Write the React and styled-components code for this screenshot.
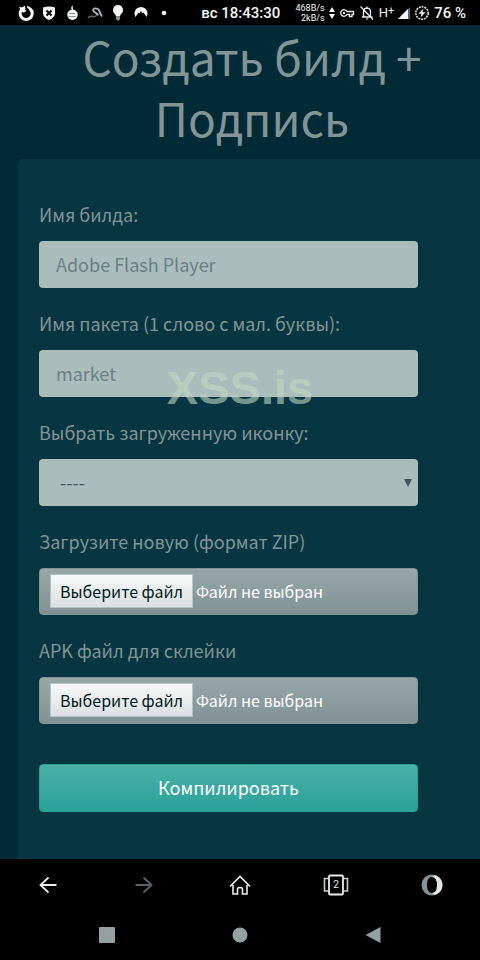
import React from 'react'
import styled, { createGlobalStyle } from 'styled-components';


function Upload({ id, label }) {
  return (
    <Field>
      <Label htmlFor={id}>{label}</Label>
      <FileBox>
        <FileInput id={id} type="file" />
        <FileButton>Выберите файл</FileButton>
        <FileName>Файл не выбран</FileName>
      </FileBox>
    </Field>
  );
}

function StatusBar() {
  return (
    <Status>
      <Notifications>
        <Icon viewBox="0 0 16 16" $size={16}>
          <path d="M8 2.500A6 6 0 1 0 13 5" fill="none" stroke="#f4f6f6" strokeWidth="3" transform="rotate(-8 8 8)" />
          <path d="M1 1.500L6.500 4L8.500 6L6 7.500L3 7z" fill="#f4f6f6" />
          <path d="M9 1q5 1 6.500 6h-3Q11.500 4 9 2.500z" fill="#f4f6f6" />
        </Icon>
        <Icon viewBox="0 0 16 16" $size={16}>
          <path d="M2 2.500Q8 .500 14 2.500V9Q13 13 8 15Q3 13 2 9z" fill="#f4f6f6" />
          <path d="M5.500 5.500l5 5M10.500 5.500l-5 5" stroke="#000" strokeWidth="2" />
        </Icon>
        <Icon viewBox="0 0 16 16" $size={16}>
          <path d="M8 5L7 3L8.500 0L9 4.500A5.200 5.200 0 1 1 8 4.500z" fill="#f4f6f6" />
          <path d="M5 8.500h6M4.500 11.500h7" stroke="#84949a" />
        </Icon>
        <Icon viewBox="0 0 16 16" $size={16}>
          <path d="M1 13Q3 10.500 6 11.500T10 8.500" fill="none" stroke="#56666a" strokeWidth="1.400" />
          <path d="M11.500 10L7 6.500Q5 4.500 7.500 3.500Q11 3 12.500 6Q13 9 15 11.500" fill="none" stroke="#a9b5b6" strokeWidth="1.800" />
        </Icon>
        <Icon viewBox="0 0 16 16" $size={16}>
          <path d="M8 0a5 5 0 0 0-3 9q.800.800.800 2.500h4.400q0-1.700.800-2.500A5 5 0 0 0 8 0z" fill="#f4f6f6" />
          <path d="M6 12h4v2l-1 1.500H7L6 14z" fill="#849496" />
        </Icon>
        <Icon viewBox="0 0 16 16" $size={16}>
          <path d="M2.500 12A6.500 6.500 0 1 1 13.500 12L10.500 7.500L9.500 8.500L8 6L6.500 8.500L5.500 7.500z" fill="#f4f6f6" />
        </Icon>
        <Icon viewBox="0 0 16 16" $size={16}>
          <circle cx="8" cy="8" r="2.300" fill="#f4f6f6" />
        </Icon>
      </Notifications>
      <Clock>вс 18:43:30</Clock>
      <System>
        <Speed>
          <span>468B/s</span>
          <span>2kB/s</span>
        </Speed>
        <Icon viewBox="0 0 6 14" $size={6} $height={14}>
          <path d="M3 1l3 5H0zM3 13l3-5H0z" fill="#f4f6f6" />
        </Icon>
        <Icon viewBox="0 0 16 16" $size={16}>
          <path d="M8 6.500h6.500v3H13v2h-2.500v-2H8A3.300 3.300 0 1 1 8 6.500z" fill="none" stroke="#e8eeee" strokeWidth="1.300" />
          <circle cx="5" cy="8" r="1.200" fill="#e8eeee" />
        </Icon>
        <Icon viewBox="0 0 16 16" $size={16}>
          <path d="M3 12h10.500M4.500 12V7Q4.500 3.500 8 3Q11.500 3.500 11.500 7v5M8 1.500V3M1.500 1.500l12.500 13" fill="none" stroke="#e8eeee" strokeWidth="1.300" />
          <path d="M6.500 13.500h3L8 15z" fill="#e8eeee" />
        </Icon>
        <Network>H<sup>+</sup></Network>
        <Icon viewBox="0 0 12 12" $size={12}>
          <path d="M12 0v12H0z" fill="#56666a" />
          <path d="M10 2v10H0z" fill="#f4f6f6" />
        </Icon>
        <Icon viewBox="0 0 16 16" $size={16}>
          <circle cx="8" cy="8" r="6.200" fill="none" stroke="#dfe6e6" strokeWidth="1.500" strokeDasharray="2 .800" />
          <path d="M9.500 3.500L4.500 8.800h3L6.500 12.500L11.500 7.200h-3z" fill="#f4f6f6" />
        </Icon>
        <Battery>76 %</Battery>
      </System>
    </Status>
  );
}

function BrowserBar() {
  return (
    <BrowserNav>
      <NavButton aria-label="Назад">
        <Icon viewBox="0 0 24 24" $size={24}>
          <path d="M20.500 12H4.500M12.500 4.500L4.500 12l8 7.500" fill="none" stroke="#e8eeee" strokeWidth="1.800" />
        </Icon>
      </NavButton>
      <NavButton aria-label="Вперёд">
        <Icon viewBox="0 0 24 24" $size={24}>
          <path d="M3.500 12h16M11.500 4.500l8 7.500l-8 7.500" fill="none" stroke="#56666a" strokeWidth="1.800" />
        </Icon>
      </NavButton>
      <NavButton aria-label="Домой">
        <Icon viewBox="0 0 24 24" $size={24}>
          <path d="M2 13.500L12 3.500l10 10M5 12v9h4.500v-5q0-1.500 2.500-1.500t2.500 1.500v5H19v-9" fill="none" stroke="#e8eeee" strokeWidth="1.600" />
        </Icon>
      </NavButton>
      <NavButton aria-label="Вкладки">
        <Tabs>
          <Icon viewBox="0 0 28 24" $size={28} $height={24}>
            <rect x="7" y="2.500" width="14" height="19" rx="1" fill="none" stroke="#e8eeee" strokeWidth="1.800" />
            <path d="M6 5.500H2.500v12.500h4M22 5.500h3.500v12.500h-4" fill="none" stroke="#c4cece" strokeWidth="1.600" />
          </Icon>
          <TabCount>2</TabCount>
        </Tabs>
      </NavButton>
      <NavButton aria-label="Меню">
        <Icon viewBox="0 0 24 24" $size={24}>
          <path fillRule="evenodd" d="M12 1.500a10.500 10.500 0 1 0 0 21a10.500 10.500 0 1 0 0-21zM12 4q5 0 5 8t-5 8t-5-8t5-8z" fill="#849496" />
          <path d="M12 4Q14 2 16 2.500Q22.500 5.500 22.500 12T16 21.500Q14 22 12 20q5 0 5-8t-5-8z" fill="#e4e6e6" />
        </Icon>
      </NavButton>
    </BrowserNav>
  );
}

function SystemBar() {
  return (
    <SystemNav>
      <NavButton aria-label="Обзор">
        <Icon viewBox="0 0 16 16" $size={16}>
          <rect width="16" height="16" rx="1" fill="#93a1a1" />
        </Icon>
      </NavButton>
      <NavButton aria-label="Главный экран">
        <Icon viewBox="0 0 16 16" $size={16}>
          <circle cx="8" cy="8" r="7.500" fill="#93a1a1" />
        </Icon>
      </NavButton>
      <NavButton aria-label="Вернуться">
        <Icon viewBox="0 0 16 16" $size={16}>
          <path d="M15.500 0v16L.500 8z" fill="#93a1a1" />
        </Icon>
      </NavButton>
    </SystemNav>
  );
}

function App() {
  return (
    <Screen>
      <GlobalStyle />
      <StatusBar />
      <Page>
        <Title>Создать билд + Подпись</Title>
        <Form onSubmit={(e) => e.preventDefault()}>
          <Field>
            <Label htmlFor="name">Имя билда:</Label>
            <Input id="name" placeholder="Adobe Flash Player" />
          </Field>
          <Field>
            <Label htmlFor="package">Имя пакета (1 слово с мал. буквы):</Label>
            <Input id="package" placeholder="market" />
          </Field>
          <Field>
            <Label htmlFor="icon">Выбрать загруженную иконку:</Label>
            <SelectBox>
              <Select id="icon">
                <option>----</option>
              </Select>
              <Arrow viewBox="0 0 8 8">
                <path d="M0 0h8L4 8z" fill="#44565a" />
              </Arrow>
            </SelectBox>
          </Field>
          <Upload id="zip" label="Загрузите новую (формат ZIP)" />
          <Upload id="apk" label="APK файл для склейки" />
          <Submit type="submit">Компилировать</Submit>
        </Form>
        <Watermark>XSS.is</Watermark>
      </Page>
      <BrowserBar />
      <SystemBar />
    </Screen>
  );
}

export default App;

const GlobalStyle = createGlobalStyle`
  * {
    box-sizing: border-box;
  }

  body {
    margin: 0;
    background: #000;
  }

  body, button, input, select {
    font-family: 'Noto Sans CJK SC', 'Noto Sans', sans-serif;
  }
`;

const Screen = styled.div`
  display: flex;
  flex-direction: column;
  min-height: 100vh;
`;

const Icon = styled.svg`
  display: block;
  flex: none;
  width: ${({ $size }) => $size}px;
  height: ${({ $size, $height }) => $height || $size}px;
`;

const Status = styled.header`
  display: flex;
  align-items: center;
  justify-content: space-between;
  height: 25px;
  padding: 0 14px 0 18px;
  background: #000;
  color: #f4f6f6;
  font-family: Roboto, sans-serif;
  white-space: nowrap;
`;

const Notifications = styled.div`
  display: flex;
  gap: 7px;
`;

const Clock = styled.time`
  margin-left: 14px;
  font-size: 15px;
  font-weight: 500;
`;

const System = styled.div`
  display: flex;
  align-items: center;
  gap: 4px;
`;

const Speed = styled.div`
  display: flex;
  flex-direction: column;
  align-items: flex-end;
  font-size: 9px;
  line-height: 10px;
`;

const Network = styled.span`
  display: flex;
  font-size: 13px;
  line-height: 16px;

  sup {
    font-size: 11px;
    line-height: 12px;
  }
`;

const Battery = styled.span`
  font-size: 15px;
  font-weight: 500;
`;

const Page = styled.main`
  position: relative;
  display: flex;
  flex: 1;
  flex-direction: column;
  padding-left: 18px;
  background: #002b36;
`;

const Title = styled.h1`
  margin: 0;
  padding: 1px 24px 11px 30px;
  color: #839496;
  font-size: 46px;
  font-weight: 400;
  line-height: 61px;
  text-align: center;
`;

const Form = styled.form`
  flex: 1;
  padding: 40px 62px 47px 21px;
  border-radius: 5px 0 0 0;
  background: #073642;
`;

const Field = styled.div`
  display: flex;
  flex-direction: column;
  gap: 12px;
  margin-bottom: 20px;
`;

const Label = styled.label`
  color: #839496;
  font-size: 18px;
  line-height: 30px;
`;

const Input = styled.input`
  width: 100%;
  height: 47px;
  padding: 0 17px 2px;
  border: 0;
  border-radius: 4px;
  background: #a9bdbb;
  color: #073642;
  font-size: 18px;

  &::placeholder {
    color: #6b7f84;
    opacity: 1;
  }
`;

const SelectBox = styled.div`
  position: relative;
`;

const Select = styled.select`
  display: block;
  width: 100%;
  height: 47px;
  padding: 0 21px 2px;
  border: 0;
  border-radius: 4px;
  appearance: none;
  background: #a9bdbb;
  color: #44565a;
  font-size: 18px;
`;

const Arrow = styled.svg`
  position: absolute;
  top: 20px;
  right: 6px;
  width: 8px;
  height: 8px;
  pointer-events: none;
`;

const FileBox = styled.div`
  position: relative;
  display: flex;
  align-items: center;
  gap: 3px;
  height: 47px;
  padding: 0 10px 1px;
  border: 1px solid #839496;
  border-radius: 4px;
  background: linear-gradient(#98a6a7, #819294);
  font-size: 16px;
  line-height: 32px;
  white-space: nowrap;
`;

// sits over the whole box so a click anywhere opens the picker
const FileInput = styled.input`
  position: absolute;
  inset: 0;
  width: 100%;
  opacity: 0;
  cursor: pointer;
`;

const FileButton = styled.span`
  padding: 0 9px;
  border: 1px solid #b4c4c2;
  background: linear-gradient(#f7f9f9, #dcdfdf);
  color: #001b22;
`;

const FileName = styled.span`
  color: #fff;
`;

const Submit = styled.button`
  width: 100%;
  height: 48px;
  margin-top: 20px;
  padding: 0 0 2px;
  border: 1px solid #2aa198;
  border-radius: 4px;
  background: linear-gradient(#48b0a9, #2aa198);
  color: #fff;
  font-size: 18px;
`;

const Watermark = styled.div`
  position: absolute;
  top: 335px;
  right: 0;
  left: 0;
  color: rgba(192, 216, 196, 0.62);
  font-family: 'Liberation Sans', sans-serif;
  font-size: 47px;
  font-weight: 700;
  line-height: 56px;
  text-align: center;
  pointer-events: none;
`;

const BrowserNav = styled.nav`
  display: grid;
  grid-template-columns: repeat(5, 1fr);
  height: 51px;
  background: #000;
`;

const SystemNav = styled.nav`
  display: grid;
  grid-template-columns: repeat(3, 1fr);
  height: 50px;
  padding: 0 40px;
  background: #000;
`;

const NavButton = styled.button`
  display: flex;
  align-items: center;
  justify-content: center;
  padding: 0;
  border: 0;
  background: none;
`;

const Tabs = styled.span`
  display: grid;
  place-items: center;

  > * {
    grid-area: 1 / 1;
  }
`;

const TabCount = styled.span`
  color: #e8eeee;
  font-family: Roboto, sans-serif;
  font-size: 10px;
`;
